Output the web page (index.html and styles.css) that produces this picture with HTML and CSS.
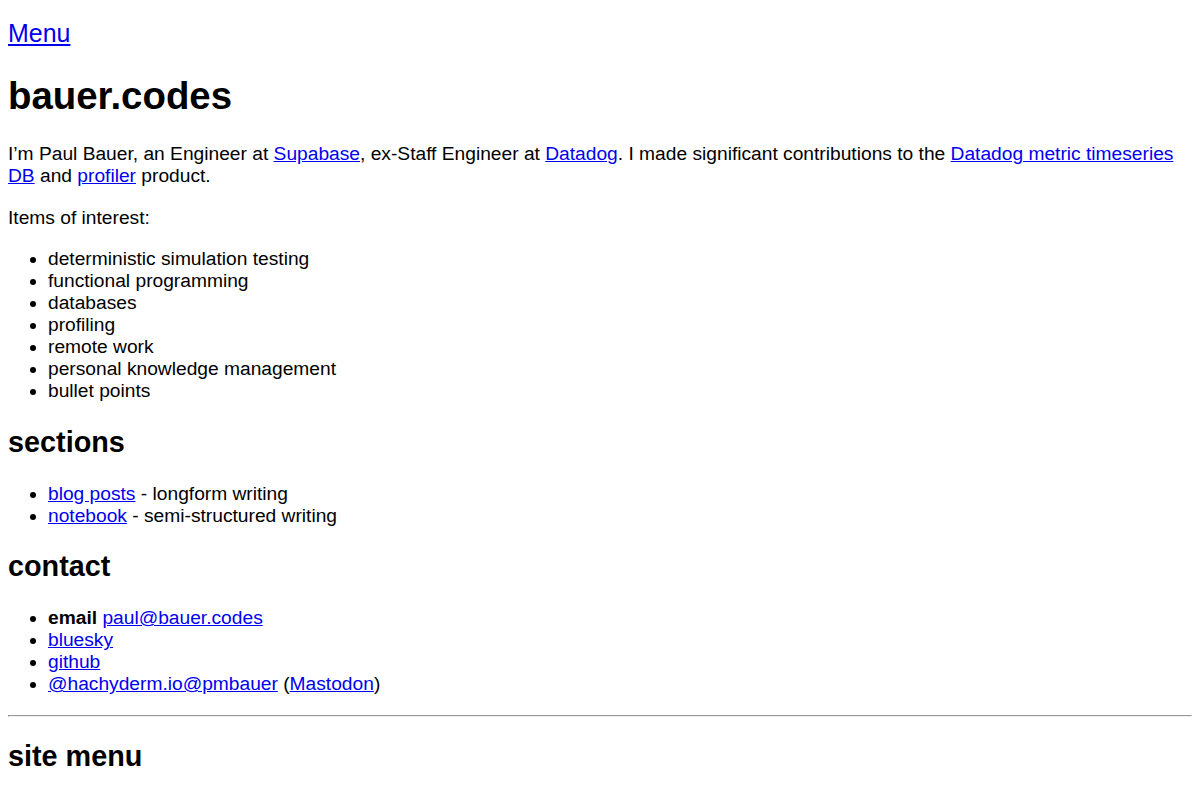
FILE: index.html
```html
<!DOCTYPE html>
<html lang="en">
<head>
    <meta charset="UTF-8">
    <meta name="viewport" content="width=device-width, initial-scale=1.0">
    <title>bauer.codes</title>
    <link rel="stylesheet" href="styles.css">
</head>
<body>
    <p class="menu-link"><a href="#site-menu">Menu</a></p>

    <h1>bauer.codes</h1>

    <p>I’m Paul Bauer, an Engineer at <a href="#">Supabase</a>, ex-Staff Engineer at <a href="#">Datadog</a>. I made significant contributions to the <a href="#">Datadog metric timeseries DB</a> and <a href="#">profiler</a> product.</p>

    <p>Items of interest:</p>
    <ul>
        <li>deterministic simulation testing</li>
        <li>functional programming</li>
        <li>databases</li>
        <li>profiling</li>
        <li>remote work</li>
        <li>personal knowledge management</li>
        <li>bullet points</li>
    </ul>

    <h2>sections</h2>
    <ul>
        <li><a href="#">blog posts</a> - longform writing</li>
        <li><a href="#">notebook</a> - semi-structured writing</li>
    </ul>

    <h2>contact</h2>
    <ul>
        <li><strong>email</strong> <a href="#">paul@bauer.codes</a></li>
        <li><a href="#">bluesky</a></li>
        <li><a href="#">github</a></li>
        <li><a href="#">@hachyderm.io@pmbauer</a> (<a href="#">Mastodon</a>)</li>
    </ul>

    <hr>

    <h2 id="site-menu">site menu</h2>
</body>
</html>
```

FILE: styles.css
```css
body {
    margin: 8px;
    font-family: "Liberation Sans", Arial, sans-serif;
    font-size: 1.2em;
    color: #000;
    background: #fff;
}

a {
    color: #0000ee;
}

.menu-link {
    font-size: 1.3em;
    margin-top: 11px;
}

hr {
    margin: 0.5em 0;
}
```
